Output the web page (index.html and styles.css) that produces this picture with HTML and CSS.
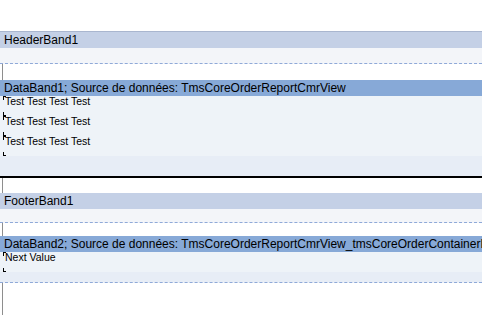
FILE: index.html
```html
<!DOCTYPE html>
<html lang="fr">
<head>
  <meta charset="UTF-8" />
  <title>Report Designer</title>
  <link rel="stylesheet" href="styles.css">
</head>
<body>
<div class="page">

  <div class="band header">
    <div class="band-title">HeaderBand1</div>
    <div class="band-body dashed h-header"></div>
  </div>

  <div class="band data">
    <div class="band-title">DataBand1; Source de données: TmsCoreOrderReportCmrView</div>
    <div class="band-body solid">
      <div class="obj">Test Test Test Test</div>
      <div class="obj">Test Test Test Test</div>
      <div class="obj">Test Test Test Test</div>
      <div class="fill h-fill1"></div>
    </div>
  </div>

  <div class="band footer">
    <div class="band-title">FooterBand1</div>
    <div class="band-body dashed h-footer"></div>
  </div>

  <div class="band data">
    <div class="band-title">DataBand2; Source de données: TmsCoreOrderReportCmrView_tmsCoreOrderContainerList</div>
    <div class="band-body dashed">
      <div class="obj">Next Value</div>
      <div class="fill h-fill2"></div>
    </div>
  </div>

</div>
</body>
</html>
```

FILE: styles.css
```css
html, body {
  margin: 0;
  height: 100%;
  overflow: hidden;
  background: #ffffff;
  font-family: "Liberation Sans", Arial, sans-serif;
  color: #000;
}

/* page margin line runs down the left edge, bands cover it */
.page {
  margin-top: 31px;
  margin-left: 2px;
  border-left: 1px solid #8e8e8e;
  min-height: calc(100% - 31px);
  box-sizing: border-box;
}

.band {
  margin-left: -3px;
  width: calc(100% + 3px);
  margin-bottom: 15px;
}

.band-title {
  height: 16px;
  line-height: 16px;
  font-size: 12px;
  padding-left: 4px;
  white-space: nowrap;
  overflow: hidden;
}

.header .band-title,
.footer .band-title {
  background: #c4d0e6;
}

.header .band-title {
  border-top: 1px solid #a9b6cf;
}

.data .band-title {
  background: #87a9d7;
}

.band-body {
  background: #f3f5f9;
  box-sizing: border-box;
}

.band-body.dashed {
  border-bottom: 1px dashed #8fa9d8;
}

.band-body.solid {
  border-bottom: 2px solid #000;
}

.data .band-body {
  background: #eef3f8;
}

.h-header { height: 16px; }
.h-footer { height: 14px; }

.fill {
  background: #e7edf6;
}

.h-fill1 { height: 20px; }
.h-fill2 { height: 10px; }

/* text object with its corner marks */
.obj {
  position: relative;
  height: 20px;
  font-size: 10.5px;
  line-height: 11px;
  padding-left: 5px;
  white-space: nowrap;
}

.obj::before,
.obj::after {
  content: "";
  position: absolute;
  left: 3px;
  width: 2px;
  height: 3px;
  border-left: 1px solid #000;
}

.obj::before {
  top: 0;
  border-top: 1px solid #000;
}

.obj::after {
  bottom: 0;
  border-bottom: 1px solid #000;
}

.header { margin-bottom: 16px; }
.data:nth-child(2) { margin-bottom: 15px; }
.footer { margin-bottom: 13px; }
```
